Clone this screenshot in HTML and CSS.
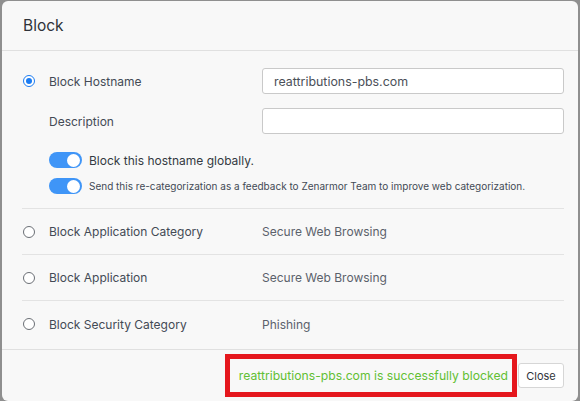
FILE: index.html
```html
<!DOCTYPE html>
<html lang="en">
<head>
<meta charset="utf-8">
<title>Block</title>
<link rel="stylesheet" href="styles.css">
</head>
<body>
<div class="modal">
  <div class="header">Block</div>
  <div class="body">
    <div class="section">
      <div class="grid-row">
        <span class="radio checked"></span>
        <span class="label">Block Hostname</span>
        <div class="input">reattributions-pbs.com</div>
      </div>
      <div class="grid-row desc">
        <span></span>
        <span class="label">Description</span>
        <div class="input"></div>
      </div>
      <div class="toggle-row first">
        <span class="toggle"><span class="knob"></span></span>
        <span class="toggle-text">Block this hostname globally.</span>
      </div>
      <div class="toggle-row second">
        <span class="toggle"><span class="knob"></span></span>
        <span class="toggle-text small">Send this re-categorization as a feedback to Zenarmor Team to improve web categorization.</span>
      </div>
    </div>
    <div class="option">
      <span class="radio"></span>
      <span class="label">Block Application Category</span>
      <span class="value">Secure Web Browsing</span>
    </div>
    <div class="option">
      <span class="radio"></span>
      <span class="label">Block Application</span>
      <span class="value">Secure Web Browsing</span>
    </div>
    <div class="option last">
      <span class="radio"></span>
      <span class="label">Block Security Category</span>
      <span class="value">Phishing</span>
    </div>
  </div>
  <div class="footer">
    <span class="message">reattributions-pbs.com is successfully blocked</span>
    <button class="close">Close</button>
  </div>
</div>
</body>
</html>
```

FILE: styles.css
```css
* { box-sizing: border-box; }
html, body { margin: 0; padding: 0; }
body {
  width: 580px;
  height: 401px;
  overflow: hidden;
  background: #8f8f8f;
  font-family: Inter, "Noto Sans", sans-serif;
}
.modal {
  margin: 1px 2px 0 2px;
  height: 400px;
  background: #f8f8f8;
  border-radius: 6px;
  display: flex;
  flex-direction: column;
}
.header {
  height: 50px;
  border-bottom: 1px solid #e0e0e0;
  padding-left: 21px;
  display: flex;
  align-items: center;
  font-size: 15.5px;
  color: #2f3339;
}
.body {
  padding: 0 14px 2px 20px;
}
.section {
  padding: 17px 0 14px;
  border-bottom: 1px solid #e3e3e3;
}
.grid-row, .option {
  display: grid;
  grid-template-columns: 27px 213px 1fr;
  align-items: center;
}
.grid-row.desc { margin-top: 14px; }
.radio {
  width: 12px;
  height: 12px;
  border-radius: 50%;
  border: 1px solid #6b6f75;
  background: #fff;
  margin-left: 1px;
  display: flex;
  align-items: center;
  justify-content: center;
}
.radio.checked {
  border-color: #1b7cf2;
}
.radio.checked::after {
  content: "";
  width: 6px;
  height: 6px;
  border-radius: 50%;
  background: #1b7cf2;
}
.label {
  font-size: 12px;
  color: #434a55;
}
.input {
  height: 26px;
  background: #fff;
  border: 1px solid #c9c9c9;
  border-radius: 3px;
  padding-left: 11px;
  display: flex;
  align-items: center;
  font-size: 12.4px;
  color: #4b5058;
}
.toggle-row {
  display: flex;
  align-items: center;
  padding-left: 27px;
}
.toggle-row.first { margin-top: 18px; }
.toggle-row.second { margin-top: 10px; }
.toggle {
  width: 33px;
  height: 16px;
  border-radius: 8px;
  background: #3f95f7;
  display: flex;
  align-items: center;
  justify-content: flex-end;
  padding-right: 2px;
  flex: none;
}
.knob {
  width: 13px;
  height: 13px;
  border-radius: 50%;
  background: #fff;
}
.toggle-text {
  margin-left: 7px;
  font-size: 12px;
  color: #343a42;
}
.toggle-text.small {
  font-size: 10px;
  color: #434a55;
}
.option {
  height: 46px;
  border-bottom: 1px solid #e3e3e3;
}
.option.last { border-bottom: none; }
.value {
  font-size: 12px;
  color: #5b616b;
}
.footer {
  flex: 1;
  border-top: 1px solid #e0e0e0;
  display: flex;
  justify-content: flex-end;
  align-items: center;
  padding: 0 14px 0 0;
}
.message {
  height: 43px;
  border: 5px solid #e5171d;
  padding: 0 4px 0 9px;
  display: flex;
  align-items: center;
  font-size: 12.2px;
  color: #62bf33;
  margin-right: 1px;
}
.close {
  height: 25px;
  width: 46px;
  padding: 0;
  background: #fff;
  border: 1px solid #d6d6d6;
  border-radius: 3px;
  font-family: Inter, "Noto Sans", sans-serif;
  font-size: 11px;
  color: #2f3339;
}
```
